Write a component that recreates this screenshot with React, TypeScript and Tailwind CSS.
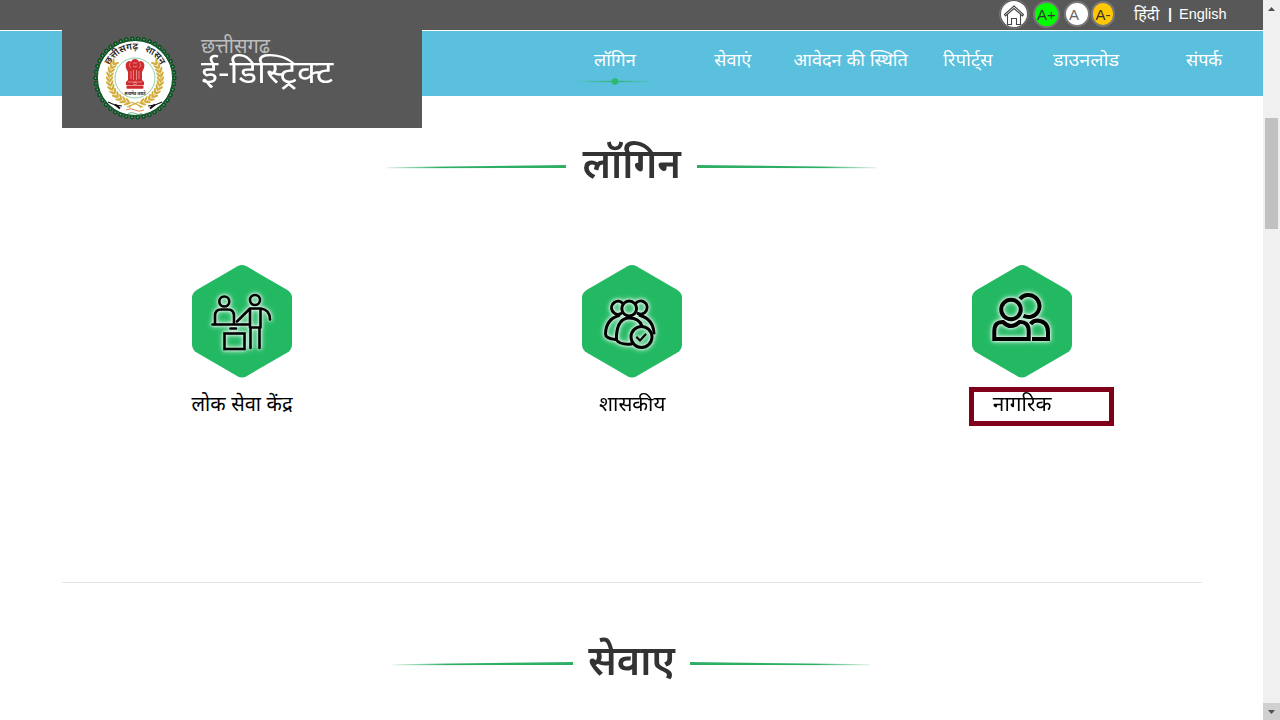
import type { ReactNode } from 'react';

const navItems = [
  { label: 'लॉगिन', active: true },
  { label: 'सेवाएं' },
  { label: 'आवेदन की स्थिति' },
  { label: 'रिपोर्ट्स', stretch: 'scale-x-[1.03]' },
  { label: 'डाउनलोड', stretch: 'scale-x-[1.09]' },
  { label: 'संपर्क' },
];

const leaves = Array.from({ length: 12 }, (_, i) => 50 + i * 10);

const Emblem = () => (
  <svg width="84" height="84" viewBox="-42 -42 84 84" className="block">
    <circle r="39.4" fill="none" stroke="#07531f" strokeWidth="4.6" strokeDasharray="0.1 5.79" strokeLinecap="round" />
    <circle r="37.600" fill="#fff" stroke="#0b5a2a" strokeWidth="1.1" />
    <circle r="39.4" fill="none" stroke="#7aa583" strokeWidth="1.5" strokeDasharray="0.1 5.79" strokeLinecap="round" />
    <defs>
      <path id="ring" d="M-28.500 0A28.500 28.500 0 0 1 28.500 0" />
    </defs>
    <text fontFamily="'Noto Sans', sans-serif" fontSize="9.5" fontWeight="600" fill="#222" textAnchor="middle" wordSpacing="4">
      <textPath href="#ring" startOffset="50%">छत्तीसगढ़ शासन</textPath>
    </text>
    {[1, -1].map((side) => (
      <g key={side} transform={`scale(${side} 1)`} fill="#d3ad3b">
        <path d="M20 -16A25.500 25.500 0 0 1 4 25.500" fill="none" stroke="#d3ad3b" strokeWidth="0.8" />
        {leaves.map((a) => (
          <g key={a} transform={`rotate(${a}) translate(0 -25.5)`}>
            <ellipse cx="0" cy="-2.1" rx="3.2" ry="1.1" transform="rotate(32)" />
            <ellipse cx="0" cy="2.1" rx="3.2" ry="1.1" transform="rotate(-32)" />
          </g>
        ))}
      </g>
    ))}
    <circle r="20" fill="#fff" stroke="#72c796" strokeWidth="0.8" />
    <g fill="#cf2a2e">
      <path d="M-8 -16Q-10 -14 -9 -10L-7 -6L-7 2L-9 4V7H9V4L7 2V-6L9 -10Q10 -14 8 -16Q5 -18 4 -16Q3 -19 0 -19Q-3 -19 -4 -16Q-5 -18 -8 -16Z" />
      <rect x="-8.5" y="7.5" width="17" height="3.2" rx="1" />
    </g>
    <g fill="none" stroke="#f0aaa6" strokeWidth="0.7">
      <path d="M-5 -15Q-7 -12 -4 -10M5 -15Q7 -12 4 -10M-2 -15H2M-2 -12Q0 -10 2 -12M-4 -7V1M-1.5 -8V2M1.5 -8V2M4 -7V1M-7 4H7" />
      <circle cy="5.5" r="1.4" />
    </g>
    <text y="16.5" fontFamily="'Noto Sans', sans-serif" fontSize="4" fontWeight="700" fill="#222" textAnchor="middle">सत्यमेव जयते</text>
    <g fill="none">
      <path d="M-6 30Q0 22 6 30M-8 29L4 24M8 29L-4 24" stroke="#d3ad3b" strokeWidth="1.2" />
      <path d="M-27 24L-20 27L-13 28M27 24L20 27L13 28" stroke="#111" strokeWidth="1.1" />
      <path d="M-20 26.500L-15 30.500M20 26.500L15 30.500" stroke="#111" strokeWidth="2.2" />
      <path d="M-9 32Q-4 29.500 0 32T9 32" stroke="#d9744a" strokeWidth="0.9" />
      <path d="M-7 35.500Q-3 33.500 0 35.500T7 35.500" stroke="#4aa66b" strokeWidth="0.8" />
    </g>
  </svg>
);

const Hexagon = ({ children }: { children: ReactNode }) => (
  <svg width="100" height="114" viewBox="0 0 100 114" className="block">
    <path
      d="M45.5 1.3Q50 -1.100 54.500 1.300L95 24.700Q100 27.700 100 33V79.500Q100 84.800 95 87.800L54.500 111.200Q50 113.600 45.500 111.200L5 87.800Q0 84.800 0 79.500V33Q0 27.700 5 24.700Z"
      fill="#23b963"
    />
    <g
      fill="none"
      stroke="#000"
      strokeWidth="2.6"
      strokeLinecap="round"
      strokeLinejoin="round"
      className="[filter:drop-shadow(0_0_1.5px_#fff)_drop-shadow(0_0_2.5px_#ffffffc0)]"
    >
      {children}
    </g>
  </svg>
);

const CounterIcon = () => (
  <Hexagon>
    <circle cx="32.3" cy="36.500" r="5" />
    <path d="M23 58V51Q23 44.500 29 44.500H36Q42 44.500 42 51V58M20.500 59.500H57M38.500 63.500H44" />
    <rect x="32.500" y="68.500" width="20" height="15.500" strokeLinejoin="miter" />
    <circle cx="63" cy="35" r="5" />
    <path d="M45 56.500L58 43.500H69Q78 45 78 54.500M58 44V62.500H68.500V44M58.500 63V83M67.500 63V83" />
  </Hexagon>
);

const OfficialIcon = () => (
  <Hexagon>
    <g strokeWidth="3">
      <path d="M39 48.500A6.500 6.500 0 1 1 41 38.500M53.500 38.500A6.500 6.500 0 1 1 56 48.500" />
      <circle cx="47.200" cy="43.500" r="7.400" />
      <path d="M37 50.500Q24 54 23.500 69Q23.500 73.500 34 74.500" />
      <path d="M47.200 53Q36 53 34.500 70V75Q38 80 49.500 79M47.200 53Q57 53 60 61M58 50.500Q71 54 72 68" />
      <circle cx="59.500" cy="72" r="10.500" />
      <path d="M55 72.500L58 75.500L63.500 69.500" strokeWidth="2.200" />
    </g>
  </Hexagon>
);

const CitizenIcon = () => (
  <Hexagon>
    <g strokeWidth="4" strokeLinecap="butt" strokeLinejoin="miter">
      <circle cx="39" cy="44.500" r="9.800" />
      <path d="M48 34A11 11 0 1 1 51.500 50.800" />
      <path d="M22.300 74V66Q22.500 56.500 31 57Q39 65 47.500 57Q56.500 56.500 56.700 66V74Z" />
      <path d="M58.500 59Q61 55.500 65.500 55.500Q76 56.500 76 67V74H60" />
    </g>
  </Hexagon>
);

const TaperLine = ({ id, flip }: { id: string; flip?: boolean }) => (
  <svg width="180" height="4" viewBox="0 0 180 4" className={flip ? '-scale-x-100' : ''}>
    <defs>
      <linearGradient id={id}>
        <stop offset="0" stopColor="#2fae66" stopOpacity="0.15" />
        <stop offset="0.3" stopColor="#2fae66" />
        <stop offset="1" stopColor="#2fae66" />
      </linearGradient>
    </defs>
    <path d="M0 2.200L180 0V3L0 3.200Z" fill={`url(#${id})`} />
  </svg>
);

const SectionTitle = ({ id, text, width }: { id: string; text: string; width: string }) => (
  <div className="flex h-[60px] items-center justify-center gap-4">
    <div className="mt-1.5">
      <TaperLine id={`${id}-left`} />
    </div>
    <h2 className={`flex justify-center whitespace-nowrap text-[42px] font-semibold leading-[60px] text-[#333] ${width}`}>
      <span className="scale-x-[0.95]">{text}</span>
    </h2>
    <div className="mt-1.5">
      <TaperLine id={`${id}-right`} flip />
    </div>
  </div>
);

const cards = [
  { title: 'लोक सेवा केंद्र', Icon: CounterIcon },
  { title: 'शासकीय', Icon: OfficialIcon, stretch: 'scale-x-[1.03]' },
  { title: 'नागरिक', Icon: CitizenIcon, stretch: 'scale-x-[1.04]', marked: true },
];

const TopBar = () => (
  <div className="flex h-[30px] items-start bg-[#585858] pl-[999px] text-white">
    <div className="mt-[-1px] flex h-[30px] items-center">
      <span className="flex size-[30px] items-center justify-center rounded-full border border-[#777]">
        <span className="flex size-[26px] items-center justify-center rounded-full bg-white">
          <svg width="22" height="22" viewBox="0 0 22 22" fill="none" stroke="#444" strokeWidth="1.1">
            <path d="M1.500 11.500L11 3L20.500 11.500L19.500 13L11 5.500L2.500 13ZM4.500 11.500V21.500H8.500V15.500H13.500V21.500H17.500V11.500" />
          </svg>
        </span>
      </span>
      <span className="ml-1 flex size-[27px] items-center justify-center rounded-full border-2 border-[#777] bg-[#00ff00] text-[15px] leading-none text-[#333]">A+</span>
      <span className="ml-1 flex size-[26px] items-center rounded-full border-2 border-[#777] bg-white pl-[3px] text-[15px] leading-none text-[#666]">A</span>
      <span className="ml-px flex h-[26px] w-6 items-center justify-center rounded-full border-2 border-[#777] bg-[#ffc800] text-[15px] leading-none text-[#333]">A-</span>
    </div>
    <div className="ml-[19px] flex h-[29px] items-center whitespace-nowrap text-[14.500px]">
      <span className="w-[27px] text-[16px]">हिंदी</span>
      <span className="w-[18px] text-center font-bold">|</span>
      <span>English</span>
    </div>
  </div>
);

const Scrollbar = () => (
  <div className="flex w-[17px] flex-col items-center justify-between bg-[#f0f0f0]">
    <div className="flex h-[118px] pt-[7px]">
      <svg width="7" height="4" viewBox="0 0 7 4"><path d="M0 4L3.500 0L7 4Z" fill="#505050" /></svg>
    </div>
    <div className="h-[111px] w-[13px] bg-[#c1c1c1]" />
    <div className="mt-auto flex h-[17px] w-full items-center justify-center bg-[#d0d0d0]">
      <svg width="7" height="4" viewBox="0 0 7 4"><path d="M0 0H7L3.500 4Z" fill="#505050" /></svg>
    </div>
  </div>
);

const App = () => {
  return (
    <div className="flex h-[720px] w-[1280px] overflow-hidden bg-white font-['Liberation_Sans','Noto_Sans',sans-serif]">
      <div className="w-[1263px]">
        <header className="relative">
          <TopBar />
          <nav className="mt-px grid h-[65px] grid-cols-6 bg-[#5bc0de] pl-[556px]">
            {navItems.map(({ label, active, stretch }) => (
              <a key={label} className="flex flex-col items-center whitespace-nowrap pt-[15px] text-[18px] leading-[28px] text-white">
                <span className={stretch}>{label}</span>
                {active && (
                  <svg width="80" height="8" viewBox="0 0 80 8" className="mt-1">
                    <defs>
                      <linearGradient id="active">
                        <stop offset="0" stopColor="#2cb96e" stopOpacity="0" />
                        <stop offset="0.5" stopColor="#2cb96e" />
                        <stop offset="1" stopColor="#2cb96e" stopOpacity="0" />
                      </linearGradient>
                    </defs>
                    <rect y="2.800" width="80" height="1.400" fill="url(#active)" />
                    <circle cx="40" cy="3.500" r="3.300" fill="#2cb96e" />
                  </svg>
                )}
              </a>
            ))}
          </nav>
          <div className="absolute left-[62px] top-0 flex h-[128px] w-[360px] bg-[#585858]">
            <div className="ml-[31px] mt-9">
              <Emblem />
            </div>
            <div className="ml-6 whitespace-nowrap pt-[34px]">
              <div className="text-[20px] leading-[24px] text-[#bdbdbd]">छत्तीसगढ</div>
              <div className="origin-left scale-x-[1.1] pt-px text-[31.500px] leading-[26px] text-white">ई-डिस्ट्रिक्ट</div>
            </div>
          </div>
        </header>

        <main>
          <section className="h-[486px] pt-[38px]">
            <SectionTitle id="login" text="लॉगिन" width="w-[99px]" />
            <div className="ml-[47px] mt-[71px] grid w-[1170px] grid-cols-3">
              {cards.map(({ title, Icon, stretch, marked }) => (
                <div key={title} className="relative flex flex-col items-center">
                  <Icon />
                  <p className={`mt-[10px] whitespace-nowrap text-[20px] leading-[30px] text-black ${stretch ?? ''}`}>{title}</p>
                  {marked && <span className="absolute left-[142px] top-[122px] h-[39px] w-[145px] border-[5px] border-[#80001c]" />}
                </div>
              ))}
            </div>
          </section>
          <hr className="ml-[62px] w-[1140px] border-[#e4e4e4]" />
          <section className="pt-12">
            <SectionTitle id="services" text="सेवाए" width="w-[85px]" />
          </section>
        </main>
      </div>
      <Scrollbar />
    </div>
  );
};

export default App;
